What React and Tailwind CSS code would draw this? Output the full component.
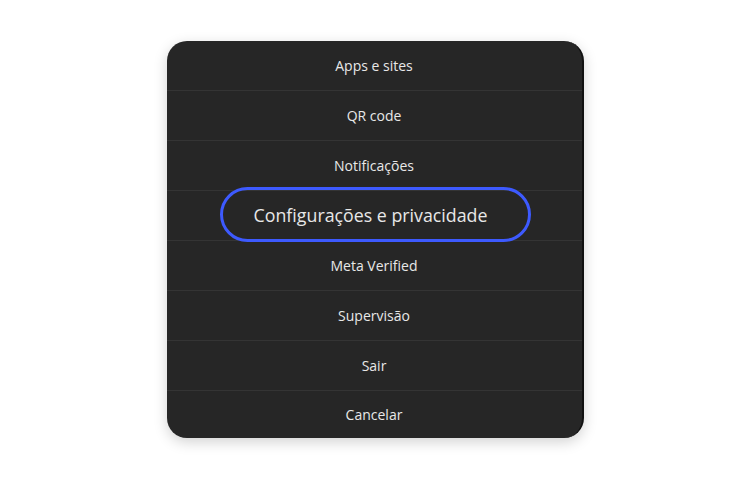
import React from 'react';

const items = [
  'Apps e sites',
  'QR code',
  'Notificações',
  'Configurações e privacidade',
  'Meta Verified',
  'Supervisão',
  'Sair',
  'Cancelar',
];

export default function App() {
  return (
    <div className="w-[750px] h-[479px] bg-white flex justify-center pt-[41px]" style={{ fontFamily: '"Open Sans", "Noto Sans", sans-serif' }}>
      <div className="w-[417px] h-[397px] bg-[#262626] rounded-[20px] overflow-hidden flex flex-col shadow-[0_4px_14px_rgba(0,0,0,0.18)] border-r-2 border-[#111]">
        {items.map((item, i) => {
          const highlighted = i === 3;
          return (
            <div
              key={item}
              className={
                'relative flex items-center justify-center shrink-0 ' +
                (i < items.length - 1 ? 'h-[50px] border-b border-[#343434]' : 'h-[47px]')
              }
            >
              {highlighted ? (
                <>
                  <span className="text-[17.8px] text-[#e8e8e8] mr-[7px]">{item}</span>
                  <div className="absolute left-[53px] top-[-4px] w-[311px] h-[55px] rounded-full border-[3px] border-[#3d5afe]" />
                </>
              ) : (
                <span className="text-[14px] text-[#e8e8e8]">{item}</span>
              )}
            </div>
          );
        })}
      </div>
    </div>
  );
}
